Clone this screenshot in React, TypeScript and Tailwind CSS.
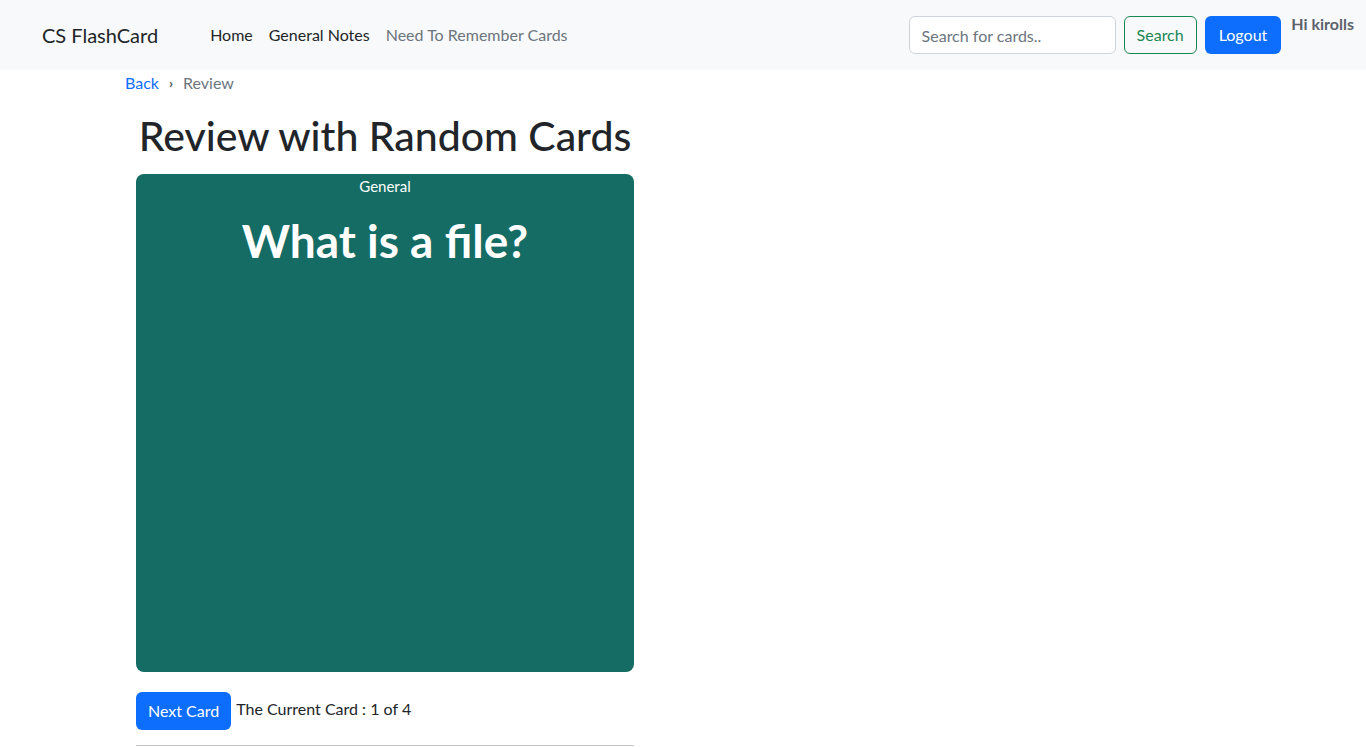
export default function App() {
  return (
    <div className="min-h-screen bg-white text-[#212529]" style={{ fontFamily: 'Lato, "Noto Sans", sans-serif' }}>
      {/* navbar */}
      <nav className="h-[70px] bg-[#f8f9fa] flex items-center pl-[42px] pr-3">
        <a className="text-[20px] text-[#212529] mr-[52px]" href="#">CS FlashCard</a>
        <ul className="flex items-center gap-4 text-[16px]">
          <li className="text-[#212529]">Home</li>
          <li className="text-[#212529]">General Notes</li>
          <li className="text-[#6c757d]">Need To Remember Cards</li>
        </ul>
        <div className="ml-auto flex items-center">
          <input
            className="w-[207px] h-[38px] border border-[#ced4da] rounded-md bg-white px-3 text-[16px] placeholder:text-[#6c757d] outline-none"
            placeholder="Search for cards.."
          />
          <button className="ml-[8px] h-[38px] px-3 border border-[#198754] text-[#198754] rounded-md text-[16px]">Search</button>
          <button className="ml-[8px] h-[38px] px-[14px] bg-[#0d6efd] text-white rounded-md text-[16px]">Logout</button>
          <span className="ml-[10px] self-start mt-[-4px] text-[16px] font-bold text-[#5c636a]">Hi kirolls</span>
        </div>
      </nav>

      {/* breadcrumb */}
      <div className="pl-[125px] pt-[1px] flex items-center text-[16px] h-[24px]">
        <a className="text-[#0d6efd]" href="#">Back</a>
        <span className="mx-[10px] text-[#495057] text-[14px] font-bold">›</span>
        <span className="text-[#6c757d]">Review</span>
      </div>

      <main className="ml-[136px] w-[498px] flex flex-col">
        <h1 className="text-[41px] font-medium whitespace-nowrap text-center leading-[1.2] mt-[17px] mb-[14px]">Review with Random Cards</h1>
        <div className="h-[498px] bg-[#146c64] rounded-lg text-white flex flex-col items-center">
          <div className="text-[15px] mt-[1px]">General</div>
          <div className="text-[46px] font-bold mt-[14px] leading-tight">What is a file?</div>
        </div>
        <div className="flex items-center mt-[20px]">
          <button className="h-[38px] px-3 bg-[#0d6efd] text-white rounded-md text-[16px]">Next Card</button>
          <span className="ml-[5px] text-[16px] -mt-1">The Current Card : 1 of 4</span>
        </div>
        <hr className="mt-[15px] border-t border-[#c6c6c6]" />
      </main>
    </div>
  );
}
